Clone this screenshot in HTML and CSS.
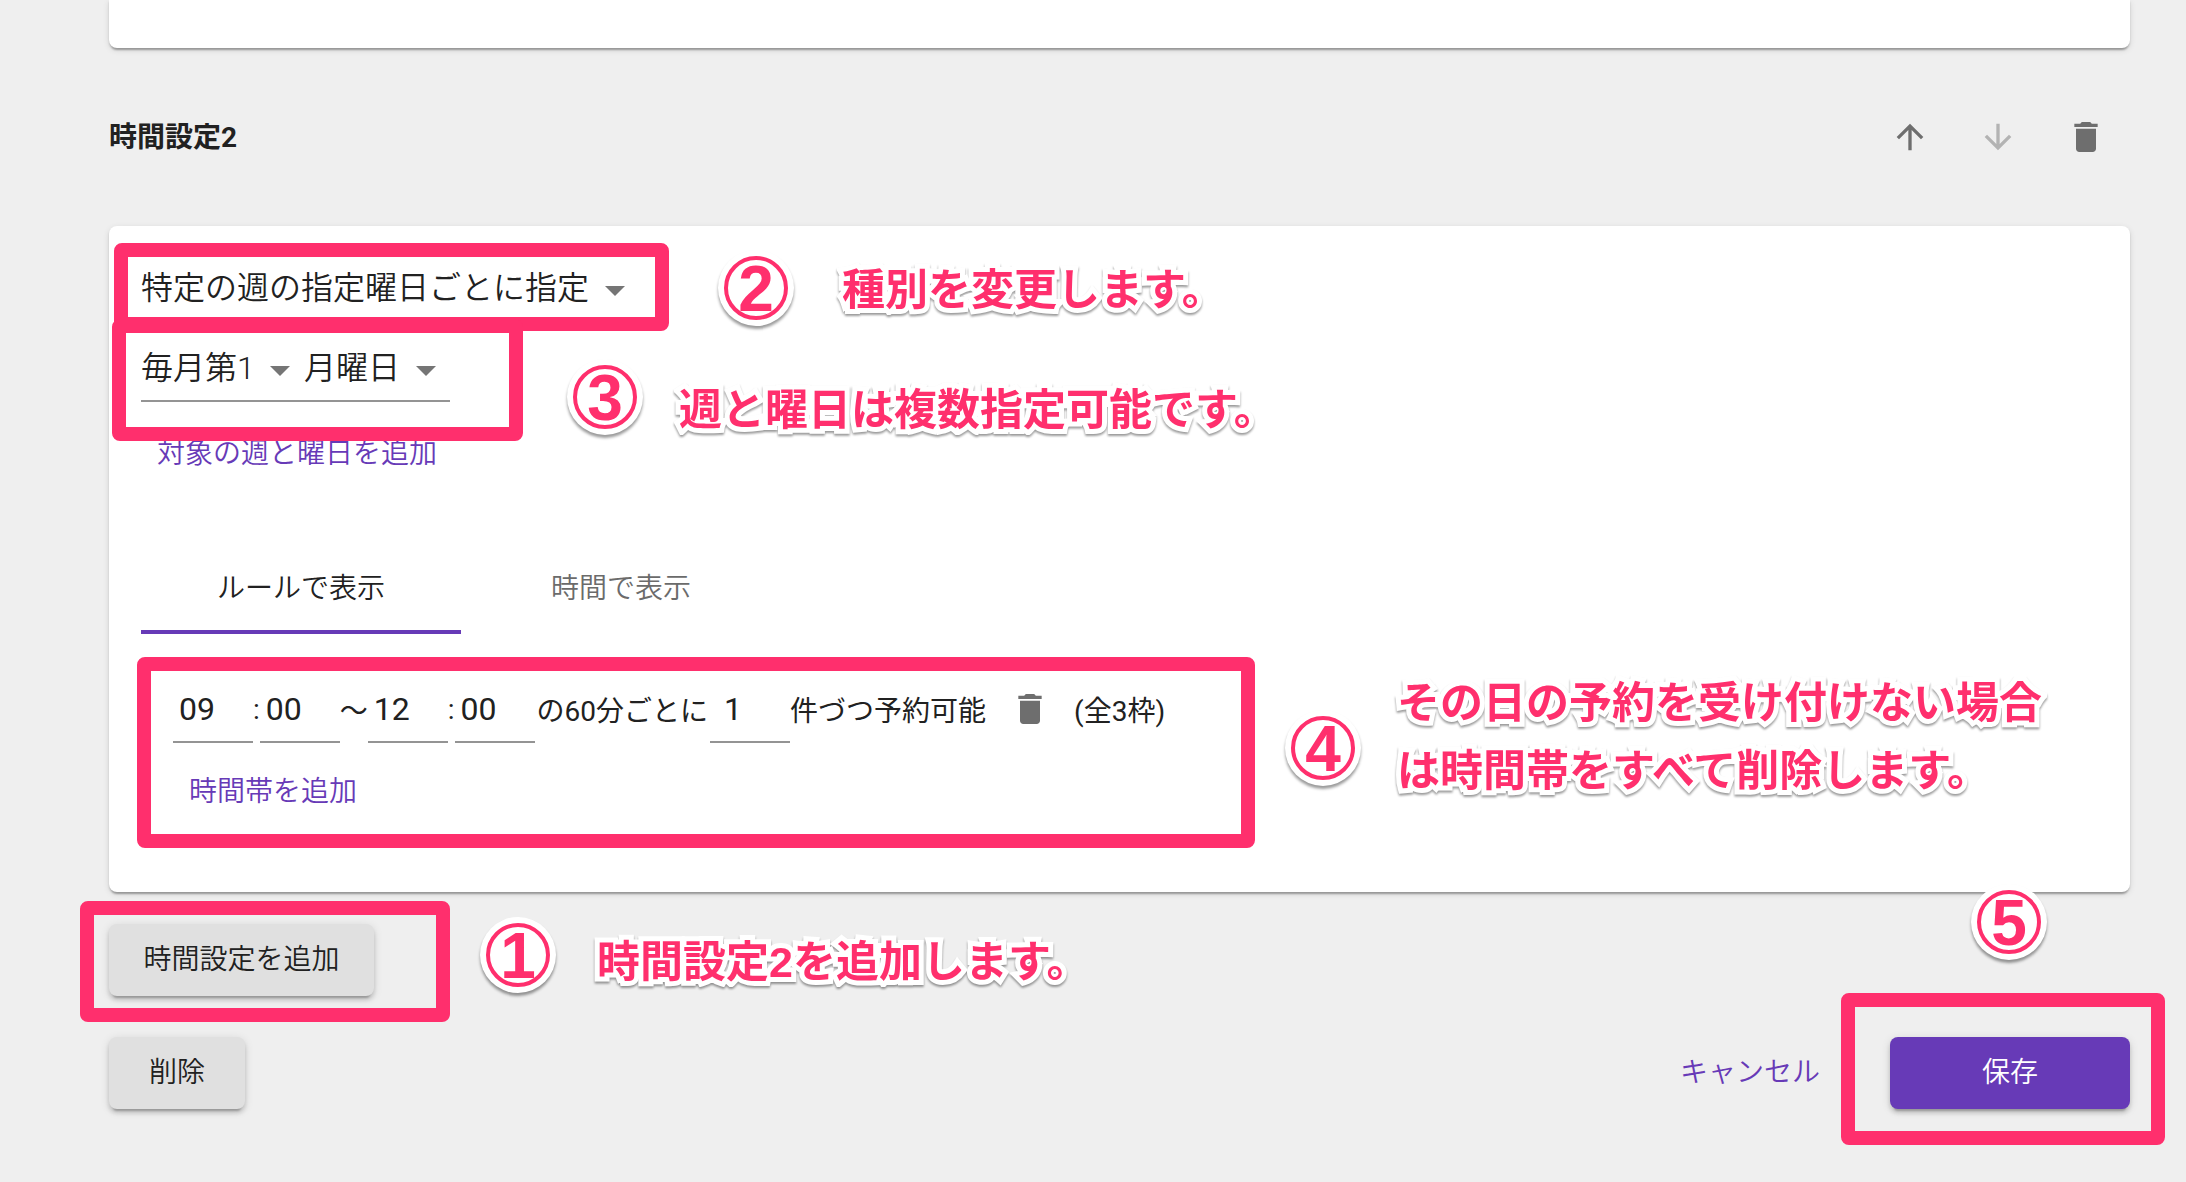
FILE: index.html
```html
<!DOCTYPE html>
<html lang="ja">
<head>
  <meta charset="UTF-8">
  <meta name="viewport" content="width=device-width, initial-scale=1.0">
  <title>時間設定</title>
  <link rel="stylesheet" href="styles.css">
</head>
<body>

  <main class="page">

    <!-- 時間設定1 (末尾) -->
    <section class="card card-previous"></section>

    <!-- 時間設定2 -->
    <header class="section-header">
      <h2 class="section-title">時間設定2</h2>
      <div class="section-tools">
        <button type="button" class="icon-button" aria-label="上へ">
          <svg class="icon" viewBox="0 0 24 24"><path d="M4 12l1.41 1.41L11 7.83V20h2V7.83l5.58 5.59L20 12l-8-8-8 8z"/></svg>
        </button>
        <button type="button" class="icon-button" aria-label="下へ" disabled>
          <svg class="icon" viewBox="0 0 24 24"><path d="M20 12l-1.41-1.41L13 16.17V4h-2v12.17l-5.58-5.59L4 12l8 8 8-8z"/></svg>
        </button>
        <button type="button" class="icon-button" aria-label="削除">
          <svg class="icon" viewBox="0 0 24 24"><path d="M6 19c0 1.1.9 2 2 2h8c1.1 0 2-.9 2-2V7H6v12zM19 4h-3.500l-1-1h-5l-1 1H5v2h14V4z"/></svg>
        </button>
      </div>
    </header>

    <section class="card card-setting">
      <div class="type-row">
        <div class="select">
          <select aria-label="種別">
            <option>特定の週の指定曜日ごとに指定</option>
          </select>
          <svg class="caret" viewBox="0 0 24 24"><path d="M7 11l5 5 5-5z"/></svg>
        </div>
      </div>

      <div class="week-row">
        <div class="select">
          <select aria-label="週">
            <option>毎月第1</option>
          </select>
          <svg class="caret" viewBox="0 0 24 24"><path d="M7 11l5 5 5-5z"/></svg>
        </div>
        <div class="select">
          <select aria-label="曜日">
            <option>月曜日</option>
          </select>
          <svg class="caret" viewBox="0 0 24 24"><path d="M7 11l5 5 5-5z"/></svg>
        </div>
      </div>
      <button type="button" class="button button-text">対象の週と曜日を追加</button>

      <div class="tabs" role="tablist">
        <button type="button" class="tab tab-active" role="tab" aria-selected="true">ルールで表示</button>
        <button type="button" class="tab" role="tab" aria-selected="false">時間で表示</button>
      </div>

      <div class="rules">
        <div class="rule-row">
          <input class="field" type="text" value="09" aria-label="開始時">
          <span>:</span>
          <input class="field" type="text" value="00" aria-label="開始分">
          <span>〜</span>
          <input class="field" type="text" value="12" aria-label="終了時">
          <span>:</span>
          <input class="field" type="text" value="00" aria-label="終了分">
          <span class="rule-interval">の60分ごとに</span>
          <input class="field field-count" type="text" value="1" aria-label="件数">
          <span>件づつ予約可能</span>
          <button type="button" class="icon-button" aria-label="時間帯を削除">
            <svg class="icon" viewBox="0 0 24 24"><path d="M6 19c0 1.100.9 2 2 2h8c1.100 0 2-.9 2-2V7H6v12zM19 4h-3.500l-1-1h-5l-1 1H5v2h14V4z"/></svg>
          </button>
          <span>(全3枠)</span>
        </div>
        <button type="button" class="button button-text">時間帯を追加</button>
      </div>

      <!-- 注釈 ②③④ -->
      <div class="mark mark-type"></div>
      <div class="mark mark-week"></div>
      <div class="mark mark-rules"></div>
      <span class="badge badge-2">2</span>
      <p class="note note-type">種別を変更します。</p>
      <span class="badge badge-3">3</span>
      <p class="note note-week">週と曜日は複数指定可能です。</p>
      <span class="badge badge-4">4</span>
      <p class="note note-rules">その日の予約を受け付けない場合<br>は時間帯をすべて削除します。</p>
    </section>

    <div class="add-row">
      <button type="button" class="button button-raised button-add">時間設定を追加</button>

      <!-- 注釈 ① -->
      <div class="mark mark-add"></div>
      <span class="badge badge-1">1</span>
      <p class="note note-add">時間設定2を追加します。</p>
    </div>

    <footer class="actions">
      <button type="button" class="button button-raised button-delete">削除</button>
      <div class="actions-right">
        <a class="button button-text" href="#">キャンセル</a>
        <button type="button" class="button button-raised button-primary">保存</button>
      </div>

      <!-- 注釈 ⑤ -->
      <div class="mark mark-save"></div>
      <span class="badge badge-5">5</span>
    </footer>

  </main>

</body>
</html>
```
FILE: styles.css
```css
/* ================================
   Variables
================================= */
:root {
  --color-bg: #efefef;
  --color-card: #ffffff;
  --color-text: #212121;
  --color-muted: #6b6b6b;
  --color-caret: #757575;
  --color-line: #949494;
  --color-primary: #673ab7;
  --color-raised: #e0e0e0;
  --color-mark: #ff2f6d;
  --shadow-card: 0 4px 2px -2px rgba(0,0,0,0.2), 0 2px 2px rgba(0,0,0,0.14), 0 2px 6px rgba(0,0,0,0.12);
  --shadow-button: 0 6px 2px -4px rgba(0,0,0,0.2), 0 4px 4px rgba(0,0,0,0.14), 0 2px 10px rgba(0,0,0,0.12);
  --font-main: Roboto, "Noto Sans CJK JP", sans-serif;
  --font-note: "Liberation Sans", "Noto Sans CJK JP", sans-serif;
}

* {
  margin: 0;
  padding: 0;
  box-sizing: border-box;
}

body {
  font-family: var(--font-main);
  font-size: 28px;
  background: var(--color-bg);
  color: var(--color-text);
}

button, input, select {
  font: inherit;
  color: inherit;
  border: none;
  background: none;
  outline: none;
}

button {
  cursor: pointer;
}

.page {
  padding: 0 56px 0 109px;
}

/* ================================
   Card
================================= */
.card {
  position: relative;
  background: var(--color-card);
  border-radius: 8px;
  box-shadow: var(--shadow-card);
}

.card-previous {
  height: 48px;
  border-radius: 0 0 8px 8px;
}

.card-setting {
  padding: 32px 32px 64px;
}

/* ================================
   Section header
================================= */
.section-header {
  display: flex;
  align-items: center;
  justify-content: space-between;
  padding: 45px 0;
}

.section-title {
  padding-bottom: 4px;
  font-size: 28px;
  font-weight: 700;
}

.section-tools {
  display: flex;
}

.icon-button {
  display: flex;
  padding: 24px;
  color: #6e6e6e;
}

.icon-button:disabled {
  color: #b3b3b3;
}

.icon {
  width: 40px;
  height: 40px;
  fill: currentColor;
}

/* ================================
   Selects
================================= */
.type-row {
  display: flex;
  align-items: center;
  height: 60px;
}

.week-row {
  display: flex;
  width: fit-content;
  padding: 22px 0 4px;
  border-bottom: 2px solid var(--color-line);
}

.select {
  position: relative;
  display: flex;
}

.select select {
  appearance: none;
  height: 56px;
  padding-right: 49px;
  font-size: 32px;
  font-weight: 350;
}

.caret {
  position: absolute;
  top: 4px;
  right: 0;
  width: 48px;
  height: 48px;
  fill: var(--color-caret);
  pointer-events: none;
}

/* ================================
   Tabs
================================= */
.tabs {
  display: flex;
  margin-top: 48px;
}

.tab {
  width: 320px;
  height: 96px;
  color: var(--color-muted);
  font-weight: 350;
}

.tab-active {
  color: var(--color-text);
  box-shadow: inset 0 -4px var(--color-primary);
}

/* ================================
   Rules
================================= */
.rules {
  padding: 31px 32px 0;
}

.rule-row {
  display: flex;
  align-items: center;
  margin-bottom: 3px;
}

.field {
  width: 80px;
  height: 68px;
  padding: 2px 0 0 6px;
  font-size: 32px;
  border-bottom: 2px solid var(--color-line);
}

.field-count {
  padding-left: 14px;
}

.rule-interval {
  padding: 0 2px;
}

/* ================================
   Buttons
================================= */
.button {
  display: block;
  height: 72px;
  padding: 0 32px;
  font-weight: 350;
  line-height: 72px;
  text-align: center;
  text-decoration: none;
  border-radius: 8px;
}

.button-text {
  padding: 0 16px;
  color: var(--color-primary);
}

.week-row + .button-text {
  margin-top: 16px;
}

.button-raised {
  background: var(--color-raised);
  box-shadow: var(--shadow-button);
}

.button-add {
  min-width: 265px;
}

.button-delete {
  padding: 0 40px;
}

.button-primary {
  width: 240px;
  color: #ffffff;
  background: var(--color-primary);
}

.add-row {
  position: relative;
  padding-top: 32px;
}

.actions {
  position: relative;
  display: flex;
  justify-content: space-between;
  padding: 41px 0 72px;
}

.actions-right {
  display: flex;
  gap: 54px;
}

/* ================================
   Annotations
================================= */
.mark {
  position: absolute;
  border: 14px solid var(--color-mark);
  border-radius: 8px;
  pointer-events: none;
}

.mark-type {
  top: 17px;
  left: 5px;
  width: 555px;
  height: 88px;
}

.mark-week {
  top: 93px;
  left: 3px;
  width: 411px;
  height: 122px;
}

.mark-rules {
  top: 431px;
  left: 28px;
  width: 1118px;
  height: 191px;
}

.mark-add {
  top: 9px;
  left: -29px;
  width: 370px;
  height: 121px;
}

.mark-save {
  top: -3px;
  right: -35px;
  width: 324px;
  height: 152px;
}

.badge {
  position: absolute;
  width: 64px;
  height: 64px;
  border: 4px solid var(--color-mark);
  border-radius: 50%;
  box-shadow: 0 0 0 6px #ffffff, 0 3px 3px 6px rgba(0,0,0,0.4);
  background: #ffffff;
  color: var(--color-mark);
  font-family: var(--font-note);
  font-size: 64px;
  font-weight: 700;
  line-height: 58px;
  text-align: center;
}

.badge-1 {
  top: 31px;
  left: 377px;
}

.badge-2 {
  top: 30px;
  left: 615px;
}

.badge-3 {
  top: 139px;
  left: 464px;
}

.badge-4 {
  top: 490px;
  left: 1182px;
}

.badge-5 {
  top: -106px;
  right: 89px;
}

.note {
  position: absolute;
  color: var(--color-mark);
  font-family: var(--font-note);
  font-size: 43px;
  font-weight: 700;
  line-height: 68px;
  white-space: nowrap;
  -webkit-text-stroke: 10px #ffffff;
  paint-order: stroke fill;
  filter: drop-shadow(0 2px 1px rgba(0,0,0,0.4));
}

.note-type {
  top: 30px;
  left: 733px;
}

.note-week {
  top: 150px;
  left: 570px;
}

.note-rules {
  top: 443px;
  left: 1288px;
}

.note-add {
  top: 36px;
  left: 488px;
}
```
